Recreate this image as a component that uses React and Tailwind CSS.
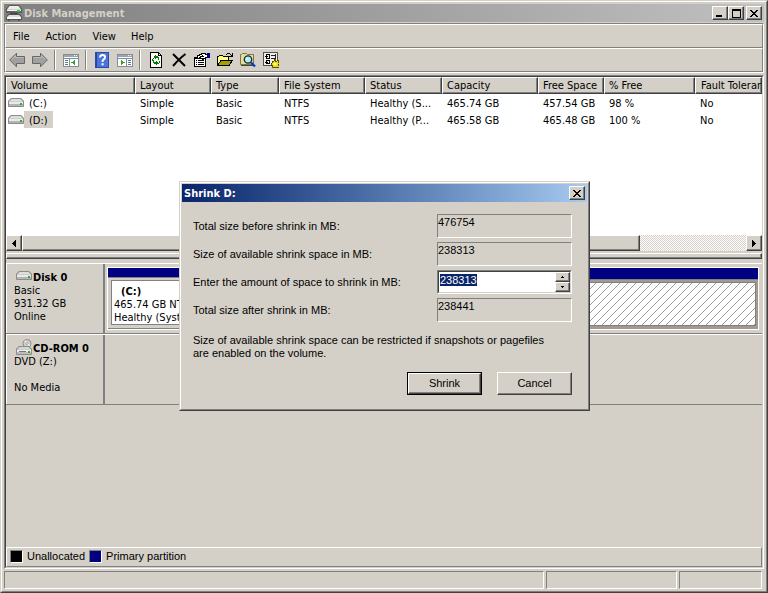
import { useEffect, useRef, useState } from 'react'
import clsx from 'clsx'

const raised = 'border border-t-white border-l-white border-r-[#404040] border-b-[#404040] shadow-[inset_-1px_-1px_0_#808080]'
const sunken = 'border border-t-[#808080] border-l-[#808080] border-r-white border-b-white'

const columns = [
  { label: 'Volume', width: 'w-[129px]' },
  { label: 'Layout', width: 'w-[76px]' },
  { label: 'Type', width: 'w-[68px]' },
  { label: 'File System', width: 'w-[86px]' },
  { label: 'Status', width: 'w-[77px]' },
  { label: 'Capacity', width: 'w-[96px]' },
  { label: 'Free Space', width: 'w-[66px]' },
  { label: '% Free', width: 'w-[91px]' },
  { label: 'Fault Toleran', width: '' },
]

const volumes = [
  { name: '(C:)', cells: ['Simple', 'Basic', 'NTFS', 'Healthy (S...', '465.74 GB', '457.54 GB', '98 %', 'No'] },
  { name: '(D:)', selected: true, cells: ['Simple', 'Basic', 'NTFS', 'Healthy (P...', '465.58 GB', '465.48 GB', '100 %', 'No'] },
]

/* ---------- icons ---------- */

function Icon({ children, className = 'size-4', crisp = true }) {
  return (
    <svg viewBox="0 0 16 16" className={clsx('shrink-0', className)} shapeRendering={crisp ? 'crispEdges' : 'auto'} fill="none" aria-hidden="true">
      {children}
    </svg>
  )
}

function DriveIcon() {
  return (
    <Icon crisp={false}>
      <path d="M3 3h10l3 3v5q0 1-1 1H1q-1 0-1-1V6z" fill="#8c8c8c" />
      <path d="M3.500 4h9L15 6.500H1z" fill="#dedede" />
      <path d="M1 6.500h14V9H1z" fill="#e9e9e9" />
      <path d="M1 9h14v2H1z" fill="#b4b4b4" />
      <rect x="12" y="8" width="2" height="2" fill="#22b422" />
    </Icon>
  )
}

function CdIcon() {
  return (
    <Icon crisp={false}>
      <circle cx="11" cy="4.500" r="4" fill="#d0d0d0" stroke="#8b8b8b" />
      <path d="M11 4.500 9 1.500M11 4.500l3 2" stroke="#fff" />
      <circle cx="11" cy="4.500" r="1" fill="#fff" stroke="#888" strokeWidth=".7" />
      <path d="M3 7h10l3 3v5q0 1-1 1H1q-1 0-1-1v-5z" fill="#8c8c8c" />
      <path d="M3.500 8h9l2.500 2.500H1z" fill="#d6d6d6" />
      <path d="M1 10.500h14V13H1z" fill="#ebebeb" />
      <path d="M1 13h14v2H1z" fill="#bdbdbd" />
      <path d="M3 12.500h7" stroke="#777" />
      <rect x="12" y="12" width="2" height="2" fill="#22b422" />
    </Icon>
  )
}

function AppIcon() {
  return (
    <Icon crisp={false}>
      <path d="M3 0h10l3 4v4H0V4z" fill="#5c5c5c" />
      <path d="M3.500 1h9L15 4.500H1z" fill="#ededed" />
      <path d="M1 4.500h14V6H1z" fill="#fafafa" />
      <rect x="11" y="5" width="3" height="2" fill="#35c435" />
      <path d="M4 8h8v2H4z" fill="#444" />
      <path d="M2 9h12l2 3v3h-2v1h-2v-1H4v1H2v-1H0v-3z" fill="#555" />
      <path d="M3 10h10l2 2H1z" fill="#dcdcdc" />
      <path d="M1 12h14v2H1z" fill="#f6f6f6" />
    </Icon>
  )
}

function ArrowIcon({ flip }) {
  return (
    <Icon crisp={false} className={clsx('size-4', flip && '-scale-x-100')}>
      <path d="M.7 8 7.500 1.200v3.300h8v7h-8v3.300z" fill="#a0a0a0" stroke="#666" />
      <path d="M2.500 7.500 6.500 3.500v2h8" stroke="#bdbdbd" />
    </Icon>
  )
}

function PanelIcon({ right }) {
  return (
    <Icon>
      <rect x=".5" y="2.500" width="15" height="12" fill="#fff" stroke="#858d98" />
      <rect x="1" y="3" width="14" height="2" fill="#98a4b4" />
      <path d="M11 3.500h1M13 3.500h1" stroke="#fff" />
      <path d="M1 6.500h14" stroke="#858d98" />
      <path d={right ? 'M9.500 7v7' : 'M6.500 7v7'} stroke="#858d98" />
      <path d={right ? 'M11 8.500h3M11 10.500h3M11 12.500h3' : 'M2 8.500h3M2 10.500h3M2 12.500h3'} stroke="#5f7893" />
      <path d={right ? 'M4 8v5l4-2.500z' : 'M12 8v5l-4-2.500z'} fill="#2fa52f" />
    </Icon>
  )
}

function HelpIcon() {
  return (
    <Icon crisp={false}>
      <rect x="1.500" y=".5" width="13" height="15" fill="#4a74dc" stroke="#2a4ca8" />
      <path d="M2.500 1v14" stroke="#25459c" />
      <path d="M6 5.500Q6 3 8.500 3T11 5.200Q11 6.500 9.700 7.300T8.600 9.800" stroke="#fff" strokeWidth="2" />
      <rect x="7.600" y="11.300" width="2" height="2" fill="#fff" />
    </Icon>
  )
}

function RefreshIcon() {
  return (
    <Icon>
      <path d="M2 0h9v1h1v1h1v1h1v13H2z" fill="#000" />
      <path d="M3 1h7v3h3v11H3z" fill="#fff" />
      <path d="M11 2h1v1h-1z" fill="#fff" />
      <path d="M7 3h1v1h2v1h1v3h-1V6H8v1H7V6H6V4h1zM5 6h1v1H5zM4 7h1v2H4z" fill="#008000" />
      <path d="M9 13H8v-1H6v-1H5V8h1v2h2V9h1v1h1v2H9zM11 9h1v2h-1v1h-1v-1h1z" fill="#008000" />
    </Icon>
  )
}

function DeleteIcon() {
  return (
    <Icon crisp={false}>
      <path d="M2 2q3 3 12 12M14.500 2Q9 6 2 14" stroke="#000" strokeWidth="2" />
    </Icon>
  )
}

function PropertiesIcon() {
  return (
    <Icon>
      <path d="M.5 5.500h11v9H.5z" fill="#fff" stroke="#000" />
      <path d="M1 6.500h10" stroke="#000" />
      <path d="M2 8.500h1M4 8.500h6M2 10.500h1M4 10.500h6M2 12.500h1M4 12.500h6" stroke="#000" />
      <path d="M3.500 6V3.500h2v-1h2v-1h4v1h2v3h-2v1h-2v2h-1v-2h-2v-1h-1v1z" fill="#fff" stroke="#000" />
      <path d="M6 4.500h4M8 3.500h1" stroke="#000" />
      <path d="M13 1h3v5h-3z" fill="#000080" />
    </Icon>
  )
}

function FolderIcon() {
  return (
    <Icon>
      <path d="M.5 13.500v-9h1l1-1h3l1 1h5v4" fill="#ffff80" stroke="#000" />
      <path d="M.5 13.500l3.500-5h11.500l-3.500 5z" fill="#a8a000" stroke="#000" />
      <path d="M9 2.500h1M10 1.500h3M13 2.500h1M14 3.500h1M12 4.500h3M15 1v4" stroke="#000" />
    </Icon>
  )
}

function SearchIcon() {
  return (
    <Icon crisp={false}>
      <path d="M.5 12.500v-10h1l1-1h4l1 1h6v10z" fill="#e4dc9c" stroke="#77774a" />
      <path d="M1 13.500h12" stroke="#444" />
      <circle cx="8" cy="7.500" r="3.700" fill="#a6eef3" stroke="#222" strokeWidth="1.300" />
      <path d="M6.500 7.500 8 6" stroke="#fff" />
      <path d="m11 10.500 4 4" stroke="#0b3fc0" strokeWidth="2.400" />
    </Icon>
  )
}

function SettingsIcon() {
  return (
    <Icon>
      <path d="M.5.500h14v13H.5z" fill="#f1efea" stroke="#505050" />
      <path d="M3.500 2.500h3v4h-3zM3.500 8.500h3v3h-3z" stroke="#000" />
      <path d="M2 4.500h3M2 10.500h3" stroke="#000" />
      <path d="M8 3.500h5M8 6.500h5M12.500 2v5" stroke="#222" />
      <path d="M11 7h1v2h2V8h1v2h1v2h-1v1h1v2h-2v1h-1v-1h-2v1h-1v-1H9v-2H8v-2h1V9h2z" fill="#f0e000" stroke="#3c3800" strokeWidth=".8" />
      <rect x="11" y="11" width="2" height="2" fill="#fff" />
    </Icon>
  )
}

/* ---------- small controls ---------- */

function CaptionButton({ label, children, className }) {
  return (
    <button type="button" aria-label={label} className={clsx('flex h-[14px] w-4 items-center justify-center bg-[#d4d0c8]', raised, className)}>
      <svg viewBox="0 0 10 9" className="h-[9px] w-[10px]" shapeRendering="crispEdges" fill="none" stroke="#000" aria-hidden="true">
        {children}
      </svg>
    </button>
  )
}

const closeGlyph = <path d="M1 1h2v1h1v1h2v-1h1v-1h2v1h-1v1h-1v1h-1v1h1v1h1v1h1v1h-2v-1h-1v-1h-2v1h-1v1h-2v-1h1v-1h1v-1h1v-1h-1v-1h-1v-1h-1z" fill="#000" stroke="none" />

function ToolButton({ label, children }) {
  return (
    <button type="button" aria-label={label} className="flex h-5 w-[23px] items-center justify-center first:w-[22px]">
      {children}
    </button>
  )
}

function Separator() {
  return (
    <div className="flex h-5 w-2 justify-center">
      <div className="w-[2px] border-l border-[#808080] bg-white" />
    </div>
  )
}

function ScrollButton({ label, right }) {
  return (
    <button type="button" aria-label={label} className={clsx('flex h-4 w-4 shrink-0 items-center justify-center bg-[#d4d0c8]', raised)}>
      <svg viewBox="0 0 4 7" className="h-[7px] w-1" shapeRendering="crispEdges" aria-hidden="true">
        <path d={right ? 'M0 0v7l4-3.500z' : 'M4 0v7L0 3.500z'} />
      </svg>
    </button>
  )
}

function Spin({ label, down, onClick }) {
  return (
    <button type="button" aria-label={label} onClick={onClick} className={clsx('flex flex-1 items-center justify-center bg-[#d4d0c8]', raised)}>
      <svg viewBox="0 0 3 2" className="h-[2px] w-[3px]" shapeRendering="crispEdges" aria-hidden="true">
        <path d={down ? 'M0 0h3v1H2v1H1V1H0z' : 'M1 0h1v1h1v1H0V1h1z'} />
      </svg>
    </button>
  )
}

/* ---------- main window ---------- */

function Toolbar() {
  return (
    <div role="toolbar" className="flex h-6 items-center border border-t-white border-l-white border-r-[#808080] border-b-[#808080]">
      <ToolButton label="Back"><ArrowIcon /></ToolButton>
      <ToolButton label="Forward"><ArrowIcon flip /></ToolButton>
      <Separator />
      <ToolButton label="Show console tree"><PanelIcon /></ToolButton>
      <Separator />
      <ToolButton label="Help"><HelpIcon /></ToolButton>
      <ToolButton label="Show action pane"><PanelIcon right /></ToolButton>
      <Separator />
      <ToolButton label="Refresh"><RefreshIcon /></ToolButton>
      <ToolButton label="Delete"><DeleteIcon /></ToolButton>
      <ToolButton label="Properties"><PropertiesIcon /></ToolButton>
      <ToolButton label="Open"><FolderIcon /></ToolButton>
      <ToolButton label="Explore"><SearchIcon /></ToolButton>
      <ToolButton label="Settings"><SettingsIcon /></ToolButton>
    </div>
  )
}

function VolumeList() {
  return (
    <section className="bg-white">
      <div className="h-[158px] overflow-hidden">
        <table className="w-full table-fixed border-separate border-spacing-0 text-left">
          <thead>
            <tr className="h-[17px]">
              {columns.map((col) => (
                <th key={col.label} className={clsx('overflow-hidden bg-[#d4d0c8] p-0 pl-[5px] font-normal whitespace-nowrap leading-[15px] not-last:pl-1', raised, col.width)}>
                  {col.label}
                </th>
              ))}
            </tr>
          </thead>
          <tbody>
            {volumes.map((vol) => (
              <tr key={vol.name} className="h-[17px] leading-[15px]">
                <td className="p-0 pl-[2px]">
                  <div className="flex items-center">
                    <DriveIcon />
                    <span className={clsx('px-[5px] pt-[2px]', vol.selected && 'bg-[#d4d0c8]')}>{vol.name}</span>
                  </div>
                </td>
                {vol.cells.map((cell, i) => (
                  <td key={i} className="overflow-hidden p-0 pt-[2px] pl-[5px] whitespace-nowrap">{cell}</td>
                ))}
              </tr>
            ))}
          </tbody>
        </table>
      </div>
      <div className="flex h-4 bg-[conic-gradient(#d4d0c8_25%,white_0_50%,#d4d0c8_0_75%,white_0)] bg-size-[2px_2px]">
        <ScrollButton label="Scroll left" />
        <div className="flex-1">
          <div className={clsx('h-4 w-[85.4%] bg-[#d4d0c8]', raised)} />
        </div>
        <ScrollButton label="Scroll right" right />
      </div>
    </section>
  )
}

function DiskRow({ icon, name, lines, children }) {
  return (
    <div className="flex h-[71px] border-t border-b border-t-white border-b-[#808080]">
      <div className="w-[99px] shrink-0 border-r-2 border-l border-l-white border-r-[#808080] pl-[7px] leading-[13px]">
        <div className="flex h-5 items-end gap-px pl-[2px] font-bold">
          {icon}
          <span>{name}</span>
        </div>
        {lines.map((line, i) => (
          <p key={i} className="h-[13px]">{line}</p>
        ))}
      </div>
      <div className="min-w-0 flex-1 py-[3px] pr-[3px] pl-[2px]">{children}</div>
    </div>
  )
}

function DiskMap() {
  return (
    <section className="flex-1 pt-1">
      <DiskRow icon={<DriveIcon />} name="Disk 0" lines={['Basic', '931.32 GB', 'Online']}>
        <div className="flex h-[63px] border border-white">
          <div className="flex flex-1 flex-col">
            <div className="h-3 border-b border-[#808080] bg-[#000080]" />
            <div className="flex-1 border-b border-[#808080] px-[3px] pt-[2px] pb-[3px]">
              <div className="h-full overflow-hidden border border-[#808080] bg-white pl-[2px] leading-[13px] whitespace-nowrap">
                <p className="pt-1 pl-[7px] font-bold">(C:)</p>
                <p>465.74 GB NTFS</p>
                <p>Healthy (System)</p>
              </div>
            </div>
          </div>
          <div className="flex flex-1 flex-col bg-[#a09a90]">
            <div className="h-3 border-b border-[#808080] bg-[#000080]" />
            <div className="px-[2px] pt-[2px]">
              <svg className="h-11 w-full border border-[#808080] bg-white" aria-hidden="true">
                <defs>
                  <pattern id="hatch" width="8" height="8" patternUnits="userSpaceOnUse">
                    <path d="M-1 9 9-1M-1 1 1-1M7 9 9 7" stroke="#909090" strokeWidth=".9" />
                  </pattern>
                </defs>
                <rect width="100%" height="100%" fill="url(#hatch)" />
              </svg>
            </div>
          </div>
        </div>
      </DiskRow>
      <DiskRow icon={<CdIcon />} name="CD-ROM 0" lines={['DVD (Z:)', '', 'No Media']} />
    </section>
  )
}

function Legend() {
  return (
    <footer className="flex h-5 items-center gap-1 border border-t-white border-l-white border-r-[#808080] border-b-[#808080] pb-px pl-[3px] font-['Liberation_Sans',Arial,sans-serif]">
      <span className={clsx('size-[13px] bg-black', sunken)} />
      <span>Unallocated</span>
      <span className={clsx('size-[13px] bg-[#000080]', sunken)} />
      <span>Primary partition</span>
    </footer>
  )
}

/* ---------- shrink dialog ---------- */

function ReadOnlyRow({ id, label, value }) {
  return (
    <>
      <label htmlFor={id}>{label}</label>
      <output id={id} className={clsx('h-6 w-full leading-[15px]', sunken)}>{value}</output>
    </>
  )
}

function ShrinkDialog() {
  const [amount, setAmount] = useState('238313')
  const field = useRef(null)

  useEffect(() => {
    field.current.focus()
    field.current.select()
  }, [])

  return (
    <div role="dialog" aria-labelledby="shrink-title" className="absolute top-[180px] left-[178px] w-[411px] border border-t-[#d4d0c8] border-l-[#d4d0c8] border-r-[#404040] border-b-[#404040] bg-[#d4d0c8] font-['Liberation_Sans',Arial,sans-serif]">
      <div className="border border-t-white border-l-white border-r-[#808080] border-b-[#808080] p-px">
        <div className="flex h-[18px] items-center justify-between bg-linear-to-r from-[#0a246a] to-[#a6caf0] pr-[2px] pl-[2px]">
          <h2 id="shrink-title" className="font-['DejaVu_Sans_Condensed','DejaVu_Sans',sans-serif] font-bold text-white">Shrink D:</h2>
          <CaptionButton label="Close">{closeGlyph}</CaptionButton>
        </div>
        <form className="pt-[10px] pr-[15px] pb-[13px] pl-[11px]" onSubmit={(e) => e.preventDefault()}>
          <div className="grid auto-rows-[28px] grid-cols-[1fr_135px] items-center">
            <ReadOnlyRow id="before" label="Total size before shrink in MB:" value="476754" />
            <ReadOnlyRow id="available" label="Size of available shrink space in MB:" value="238313" />
            <label htmlFor="amount">Enter the amount of space to shrink in MB:</label>
            <div className={clsx('h-6', sunken)}>
              <div className="flex h-full border border-t-[#404040] border-l-[#404040] border-r-[#d4d0c8] border-b-[#d4d0c8] bg-white">
                <input
                  ref={field}
                  id="amount"
                  type="text"
                  value={amount}
                  onChange={(e) => setAmount(e.target.value)}
                  className="h-4 min-w-0 flex-1 pl-px outline-none selection:bg-[#0a246a] selection:text-white"
                />
                <div className="flex w-[15px] flex-col">
                  <Spin label="Increase" onClick={() => setAmount(String(Number(amount) + 1))} />
                  <Spin label="Decrease" down onClick={() => setAmount(String(Number(amount) - 1))} />
                </div>
              </div>
            </div>
            <ReadOnlyRow id="after" label="Total size after shrink in MB:" value="238441" />
          </div>
          <p className="mt-[10px] leading-[13px]">
            Size of available shrink space can be restricted if snapshots or pagefiles
            <br />
            are enabled on the volume.
          </p>
          <div className="mt-3 flex justify-end gap-[15px]">
            <button type="submit" className="h-[23px] w-[75px] border border-black">
              <span className={clsx('flex h-full items-center justify-center', raised)}>Shrink</span>
            </button>
            <button type="button" className={clsx('h-[23px] w-[75px]', raised)}>Cancel</button>
          </div>
        </form>
      </div>
    </div>
  )
}

export default function App() {
  return (
    <div className="relative flex min-h-screen flex-col border border-t-[#d4d0c8] border-l-[#d4d0c8] border-r-[#404040] border-b-[#404040] bg-[#d4d0c8] font-['DejaVu_Sans_Condensed','DejaVu_Sans',sans-serif] text-[11px] leading-[13px] text-black">
      <div className="flex flex-1 flex-col border border-t-white border-l-white border-r-[#808080] border-b-[#808080] p-[2px]">
        <header className="flex h-[18px] items-center bg-linear-to-r from-[#808080] to-[#c0c0c0] pr-[2px] pl-[2px]">
          <AppIcon />
          <h1 className="flex-1 pl-[2px] font-bold text-[#d4d0c8]">Disk Management</h1>
          <CaptionButton label="Minimize"><path d="M1 7h6" strokeWidth="2" /></CaptionButton>
          <CaptionButton label="Maximize"><path d="M.5 1h9M1 0v9M9 0v9M.5 8.500h9" /><path d="M1 1h8" strokeWidth="2" /></CaptionButton>
          <CaptionButton label="Close" className="ml-[2px]">{closeGlyph}</CaptionButton>
        </header>

        <div className={clsx('mt-px mb-[2px]', sunken)}>
          <nav className="flex h-6 items-center border border-t-white border-l-white border-r-[#808080] border-b-[#808080]">
            {['File', 'Action', 'View', 'Help'].map((item) => (
              <button key={item} type="button" className="px-2 first:pl-[7px] last:pl-[7px]">{item}</button>
            ))}
          </nav>
          <Toolbar />
        </div>

        <main className={clsx('flex flex-1 flex-col', sunken)}>
          <div className="flex flex-1 flex-col border border-t-[#404040] border-l-[#404040] border-r-[#d4d0c8] border-b-[#d4d0c8]">
            <VolumeList />
            <div className={clsx('mt-[2px] h-[6px]', raised)} />
            <DiskMap />
            <Legend />
          </div>
        </main>

        <div role="status" className="mt-[2px] flex h-[18px] gap-[2px] pr-[2px]">
          <div className={clsx('flex-1', sunken)} />
          <div className={clsx('w-[131px]', sunken)} />
          <div className={clsx('w-[83px]', sunken)} />
        </div>
      </div>

      <ShrinkDialog />
    </div>
  )
}
